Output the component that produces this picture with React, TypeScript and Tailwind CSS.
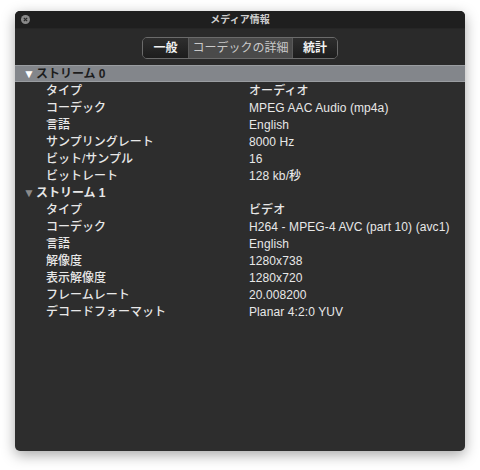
import React from "react";

const font = { fontFamily: '"Liberation Sans", "Noto Sans CJK JP", sans-serif' };

type Row = [string, string];

const stream0: Row[] = [
  ["タイプ", "オーディオ"],
  ["コーデック", "MPEG AAC Audio (mp4a)"],
  ["言語", "English"],
  ["サンプリングレート", "8000 Hz"],
  ["ビット/サンプル", "16"],
  ["ビットレート", "128 kb/秒"],
];

const stream1: Row[] = [
  ["タイプ", "ビデオ"],
  ["コーデック", "H264 - MPEG-4 AVC (part 10) (avc1)"],
  ["言語", "English"],
  ["解像度", "1280x738"],
  ["表示解像度", "1280x720"],
  ["フレームレート", "20.008200"],
  ["デコードフォーマット", "Planar 4:2:0 YUV"],
];

function DataRow({ row }: { row: Row }) {
  return (
    <div className="flex h-[17px] items-center text-[12px] text-[#e8e8e8]">
      <div className="w-[234px] shrink-0 pl-[31px] font-medium">{row[0]}</div>
      <div className="whitespace-nowrap font-medium tracking-[0.1px]">{row[1]}</div>
    </div>
  );
}

export default function App() {
  return (
    <div className="h-[470px] w-[480px] bg-white pl-[15px] pt-[11px]" style={font}>
      <div className="flex h-[440px] w-[450px] flex-col overflow-hidden rounded-[5px] bg-[#2d2d2d] shadow-[0_4px_14px_rgba(0,0,0,0.35)]">
        {/* title bar */}
        <div className="relative flex h-[17px] shrink-0 items-center justify-center bg-[#1f1f1f]">
          <div className="absolute left-[6px] top-[4px] flex h-[9px] w-[9px] items-center justify-center rounded-full bg-[#8a8a8a]">
            <svg width="5" height="5" viewBox="0 0 5 5">
              <path d="M0.8 0.8 L4.2 4.2 M4.2 0.8 L0.8 4.2" stroke="#2a2a2a" strokeWidth="1.2" />
            </svg>
          </div>
          <span className="text-[10px] font-semibold text-[#cfcfcf]">メディア情報</span>
        </div>
        {/* toolbar */}
        <div className="flex h-[37px] shrink-0 flex-col bg-[#2a2a2a]">
          <div className="h-px bg-[#262626]" />
          <div className="flex flex-1 items-start justify-center pt-[8px]">
            <div className="flex h-[22px] overflow-hidden rounded-[5px] border border-[#6b6b6b] text-[12px] font-semibold">
              <div className="flex w-[45px] items-center justify-center bg-gradient-to-b from-[#2e2e2e] to-[#1d1d1d] text-[#f2f2f2]">
                一般
              </div>
              <div className="flex w-[105px] items-center justify-center border-x border-[#5a5a5a] bg-[#4a4a4a] font-normal text-[#c9c9c9]">
                コーデックの詳細
              </div>
              <div className="flex w-[44px] items-center justify-center bg-gradient-to-b from-[#2e2e2e] to-[#1d1d1d] text-[#f2f2f2]">
                統計
              </div>
            </div>
          </div>
        </div>
        {/* content */}
        <div className="flex-1">
          <div className="flex h-[17px] items-center border-y border-[#9a9da1] bg-[#83868b] pl-[8px] text-[12px] font-semibold text-[#1d1d1d]">
            <span className="mr-[1px] text-[12px] leading-none text-white">▼</span>
            <span>ストリーム 0</span>
          </div>
          {stream0.map((r) => (
            <DataRow key={"a" + r[0]} row={r} />
          ))}
          <div className="flex h-[17px] items-center pl-[8px] text-[12px] font-semibold text-[#e6e6e6]">
            <span className="mr-[1px] text-[12px] leading-none text-[#8a8a8a]">▼</span>
            <span>ストリーム 1</span>
          </div>
          {stream1.map((r) => (
            <DataRow key={"b" + r[0]} row={r} />
          ))}
        </div>
      </div>
    </div>
  );
}
